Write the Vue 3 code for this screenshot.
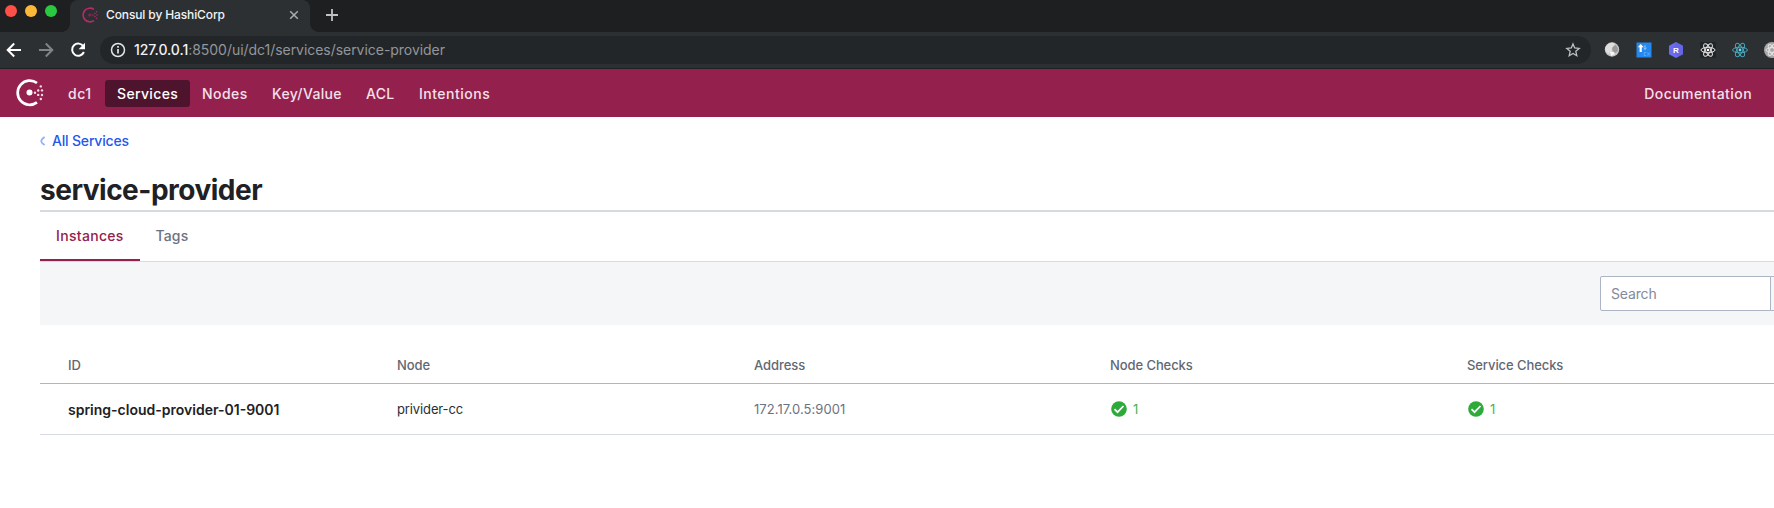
<script setup>
const nav = [
  { label: 'dc1', cls: 'n-dc' },
  { label: 'Services', cls: 'n-services' },
  { label: 'Nodes', cls: 'n-nodes' },
  { label: 'Key/Value', cls: 'n-kv' },
  { label: 'ACL', cls: 'n-acl' },
  { label: 'Intentions', cls: 'n-int' },
]
const columns = ['ID', 'Node', 'Address', 'Node Checks', 'Service Checks']
</script>

<template>
  <div class="screen">
    <div class="tabstrip">
      <div class="lights"><i class="red"></i><i class="amber"></i><i class="green"></i></div>
      <div class="tab">
        <svg class="favicon" width="16" height="16" viewBox="0 0 28 28">
          <path d="M21 4.3A12 12 0 1 0 21 23.7" fill="none" stroke="#b72a6c" stroke-width="2.8" />
          <circle cx="13.6" cy="14" r="2.7" fill="#8d2258" />
          <g fill="#b72a6c"><circle cx="19" cy="14" r="1.2" /><circle cx="22.7" cy="11.5" r="1.3" /><circle cx="22.7" cy="16.5" r="1.3" /><circle cx="26.3" cy="14" r="1.3" /><circle cx="25.5" cy="8.3" r="1.3" /><circle cx="25.5" cy="19.7" r="1.3" /></g>
        </svg>
        <span class="tab-title">Consul by HashiCorp</span>
        <svg class="close" width="10" height="10" viewBox="0 0 10 10"><path d="M1.2 1.2l7.6 7.6M8.8 1.2l-7.6 7.6" stroke="#a9acb0" stroke-width="1.5" /></svg>
      </div>
      <svg class="plus" width="12" height="12" viewBox="0 0 12 12"><path d="M6 0v12M0 6h12" stroke="#bfc1c4" stroke-width="1.8" /></svg>
    </div>

    <div class="toolbar">
      <svg class="back" width="16" height="16" viewBox="0 0 16 16"><path d="M15 8H2M8.2 1.5L1.7 8l6.5 6.5" fill="none" stroke="#fff" stroke-width="2" /></svg>
      <svg class="fwd" width="16" height="16" viewBox="0 0 16 16"><path d="M1 8h13M7.8 1.5L14.3 8l-6.5 6.5" fill="none" stroke="#818487" stroke-width="2" /></svg>
      <svg class="reload" width="16" height="16" viewBox="0 0 16 16"><path d="M13.4 4.4A6.1 6.1 0 1 0 13.9 10" fill="none" stroke="#fff" stroke-width="2" /><path d="M15 .8v6.4H8.6z" fill="#fff" /></svg>
      <div class="address">
        <svg width="16" height="16" viewBox="0 0 16 16"><circle cx="8" cy="8" r="6.5" fill="none" stroke="#e3e5e7" stroke-width="1.5" /><path d="M8 7v4.6M8 4.1v1.7" stroke="#e3e5e7" stroke-width="1.7" /></svg>
        <span class="url"><b>127.0.0.1</b>:8500/ui/dc1/services/service-provider</span>
        <svg class="star" width="16" height="16" viewBox="0 0 16 16"><path d="M8 1.9l1.7 4.1 4.5.4-3.4 2.9 1 4.4L8 11.4l-3.8 2.3 1-4.4-3.4-2.9 4.5-.4z" fill="none" stroke="#bfc1c4" stroke-width="1.3" /></svg>
      </div>
      <div class="extensions">
        <svg width="16" height="16" viewBox="0 0 16 16"><circle cx="8" cy="7.5" r="7.2" fill="#c4c4c4" /><path d="M1.5 5Q5 0 10 1L11 4Q7 5 8 9L4.5 12Q0 9 1.5 5" fill="#dedede" /><path d="M11.5 3Q15 6 13.5 9.5L11 11 8.5 8.5Q7 5 11.5 3" fill="#999" /><path d="M6 10q4-1 5 2l-4 2z" fill="#f6f6f6" /></svg>
        <svg width="16" height="16" viewBox="0 0 16 16"><path d="M.5.5h15v15H.5z" fill="#2488ee" /><path d="M4.7 2L1.8 5.2h1.8V10h2.2V5.2h1.8z" fill="#fff" /><path d="M9 3.5v4M7.7 5.7L9 7.5l1.5-1.8M9 3.5l-.8 1" stroke="#8fc5fa" fill="none" /><path d="M8.2 10.5h2M8.2 10.5v3h2M11.5 10.5l2 3M13.5 10.5l-2 3" stroke="#69aef6" stroke-width=".8" fill="none" /></svg>
        <svg width="16" height="16" viewBox="0 0 16 16"><path d="M8 0l7 3.8v8.4L8 16l-7-3.8V3.8z" fill="#6b6df0" /><path d="M8 0l7 3.8v8.4L10 15 4 9z" fill="#5758cb" opacity=".3" /><text x="8" y="11" text-anchor="middle" class="r-letter">R</text></svg>
        <svg width="16" height="16" viewBox="0 0 16 16"><path d="M0 0h16v16H0z" fill="#222527" /><g fill="none" stroke="#e5e5e5" stroke-width="1"><ellipse cx="8" cy="8" rx="7" ry="2.7" /><ellipse cx="8" cy="8" rx="7" ry="2.7" transform="rotate(60 8 8)" /><ellipse cx="8" cy="8" rx="7" ry="2.7" transform="rotate(120 8 8)" /></g><circle cx="8" cy="8" r="1.3" fill="#fff" /></svg>
        <svg width="16" height="16" viewBox="0 0 16 16"><g fill="none" stroke="#48a9bd" stroke-width="1"><ellipse cx="8" cy="8" rx="7.4" ry="2.8" /><ellipse cx="8" cy="8" rx="7.4" ry="2.8" transform="rotate(60 8 8)" /><ellipse cx="8" cy="8" rx="7.4" ry="2.8" transform="rotate(120 8 8)" /></g><circle cx="8" cy="8" r="1.4" fill="#61dafb" /></svg>
        <svg width="16" height="16" viewBox="0 0 16 16"><circle cx="8" cy="8" r="8" fill="#a6a6a6" /><g fill="none" stroke="#e5e5e5" stroke-width="1"><ellipse cx="8" cy="8" rx="6" ry="2.4" /><ellipse cx="8" cy="8" rx="6" ry="2.4" transform="rotate(60 8 8)" /><ellipse cx="8" cy="8" rx="6" ry="2.4" transform="rotate(120 8 8)" /></g></svg>
      </div>
    </div>

    <header class="consul">
      <svg class="logo" width="28" height="28" viewBox="0 0 28 28">
        <path d="M21 4A12.1 12.1 0 1 0 21 23.4" fill="none" stroke="#fff" stroke-width="2.7" />
        <circle cx="13.5" cy="13.6" r="3" fill="#fff" />
        <g fill="#f2dbe5"><circle cx="19" cy="13.7" r="1.2" /><circle cx="22.2" cy="11.5" r="1.2" /><circle cx="22.2" cy="15.9" r="1.2" /><circle cx="26" cy="11.4" r="1.2" /><circle cx="26" cy="16" r="1.2" /><circle cx="24.8" cy="7.4" r="1.2" /><circle cx="24.8" cy="20" r="1.2" /></g>
      </svg>
      <nav><a v-for="n in nav" :key="n.label" :class="n.cls">{{ n.label }}</a></nav>
      <a class="docs">Documentation</a>
    </header>

    <main>
      <div class="crumb">
        <svg width="6" height="10" viewBox="0 0 6 10"><path d="M4.6 1Q1.2 3.4 1.2 5T4.6 9" fill="none" stroke="#91b0fb" stroke-width="1.7" /></svg>
        <a>All Services</a>
      </div>
      <h1><span>service-provider</span></h1>
      <div class="tabs"><a class="active">Instances</a><a class="tags">Tags</a></div>
      <div class="filter"><div class="search"><span>Search</span></div><div class="search-by"></div></div>
      <div class="row head"><span v-for="c in columns" :key="c">{{ c }}</span></div>
      <div class="row body">
        <strong>spring-cloud-provider-01-9001</strong>
        <span class="node">privider-cc</span>
        <span class="addr">172.17.0.5:9001</span>
        <span v-for="k in 2" :key="k" class="check">
          <svg width="16" height="16" viewBox="0 0 16 16"><circle cx="8" cy="8" r="7.8" fill="#2eaa3a" /><path d="M3.5 8.2l3 3 6-6.2" fill="none" stroke="#fff" stroke-width="1.7" /></svg>1
        </span>
      </div>
    </main>
  </div>
</template>

<style>
body { margin: 0; overflow: hidden; background: #fff; }
</style>
<style scoped>
.screen { width: 1774px; height: 508px; overflow: hidden; font-family: Inter, "Liberation Sans", sans-serif; background: #fff; }
.screen * { box-sizing: border-box; }
svg { display: block; flex: none; }
.tabstrip { height: 32px; display: flex; background: #1e1f21; }
.lights { width: 70px; padding: 5px 0 0 5px; display: flex; gap: 8px; }
.lights i { width: 12px; height: 12px; border-radius: 50%; }
.red { background: #fe4f48; }
.amber { background: #fdb837; }
.green { background: #2ac93f; }
.tab { position: relative; width: 240px; height: 32px; display: flex; align-items: center; padding: 0 11px 2px 12px; background: #2d3033; border-radius: 8px 8px 0 0; color: #f2f3f4; }
.tab::before, .tab::after { content: ""; position: absolute; bottom: 0; width: 8px; height: 8px; }
.tab::before { left: -8px; background: radial-gradient(circle at 0 0, transparent 7.5px, #2d3033 8px); }
.tab::after { right: -8px; background: radial-gradient(circle at 100% 0, transparent 7.5px, #2d3033 8px); }
.tab-title { margin-left: 8px; padding-bottom: 1px; font-size: 12px; font-weight: 500; letter-spacing: -.12px; white-space: nowrap; }
.close { margin-left: auto; }
.plus { margin: 9px 0 0 16px; }
.toolbar { height: 37px; display: flex; align-items: center; background: #2d3033; border-bottom: 1px solid #202124; padding-left: 6px; }
.fwd { margin-left: 16px; }
.reload { margin-left: 16px; }
.address { flex: none; width: 1491px; height: 28px; margin-left: 14px; border-radius: 14px; background: #232629; display: flex; align-items: center; padding: 0 10px; }
.url { margin-left: 8px; padding-bottom: 2px; color: #93969a; font-size: 14px; letter-spacing: -.04px; white-space: nowrap; }
.url b { color: #f1f2f3; font-weight: 500; }
.star { margin-left: auto; }
.extensions { display: flex; gap: 16px; margin-left: 13px; }
.r-letter { font: bold 8px "Liberation Sans", sans-serif; fill: #fff; }
.consul { height: 48px; background: #93204d; display: flex; align-items: center; padding: 0 22px 0 16px; font-size: 14px; font-weight: 500; letter-spacing: .43px; color: #f5e0e9; }
nav { display: flex; margin-left: 12px; height: 27px; line-height: 27px; }
nav a { padding: 0 12px; white-space: nowrap; }
.n-dc { width: 49px; letter-spacing: .55px; }
.n-services { width: 85px; background: #4f142d; color: #fff; border-radius: 3px; letter-spacing: .35px; }
.n-nodes { width: 70px; }
.n-kv { width: 94px; letter-spacing: .35px; }
.n-acl { width: 52px; letter-spacing: .3px; }
.n-int { padding-left: 13px; letter-spacing: .5px; }
.docs { margin-left: auto; }
main { padding-left: 40px; }
.crumb { height: 47px; display: flex; align-items: center; gap: 6px; font-size: 14px; font-weight: 500; letter-spacing: -.18px; color: #2458ec; }
h1 { margin: 0; height: 48px; border-bottom: 2px solid #d5dae1; font-size: 28px; font-weight: 700; line-height: 34px; padding-top: 9px; letter-spacing: -.49px; color: #202124; }
.tabs { height: 50px; display: flex; line-height: 48px; font-size: 14px; font-weight: 500; letter-spacing: .32px; border-bottom: 1px solid #d7dae0; color: #6c7280; }
.tabs a { height: 49px; padding: 0 16px; }
.tabs .tags { padding-left: 15.5px; letter-spacing: .15px; }
.tabs .active { width: 100px; color: #93204d; border-bottom: 2px solid #93204d; }
.filter { height: 63px; background: #f5f6f8; display: flex; justify-content: flex-end; padding-top: 14px; }
.search { width: 171px; height: 35px; border: 1px solid #adb4c3; border-radius: 2px 0 0 2px; background: #fff; padding-left: 10px; font-size: 14px; line-height: 34px; letter-spacing: -.15px; color: #838a99; }
.search-by { width: 3px; height: 35px; border: solid #adb4c3; border-width: 1px 0; }
.row { display: grid; grid-template-columns: 329px 357px 356px 357px 1fr; padding-left: 28px; align-items: center; font-size: 13px; }
.head { height: 59px; padding-top: 21px; border-bottom: 1px solid #b0b6c1; color: #626873; font-weight: 500; letter-spacing: -.08px; }
.body { height: 51px; border-bottom: 1px solid #d6dbe3; color: #2c2e32; }
.body strong { font-size: 14px; font-weight: 600; color: #202124; padding-top: 1px; }
.node { letter-spacing: -.12px; }
.addr { color: #6c7280; letter-spacing: .06px; }
.check { display: flex; align-items: center; gap: 6px; padding-left: 1px; color: #48b253; }
</style>
